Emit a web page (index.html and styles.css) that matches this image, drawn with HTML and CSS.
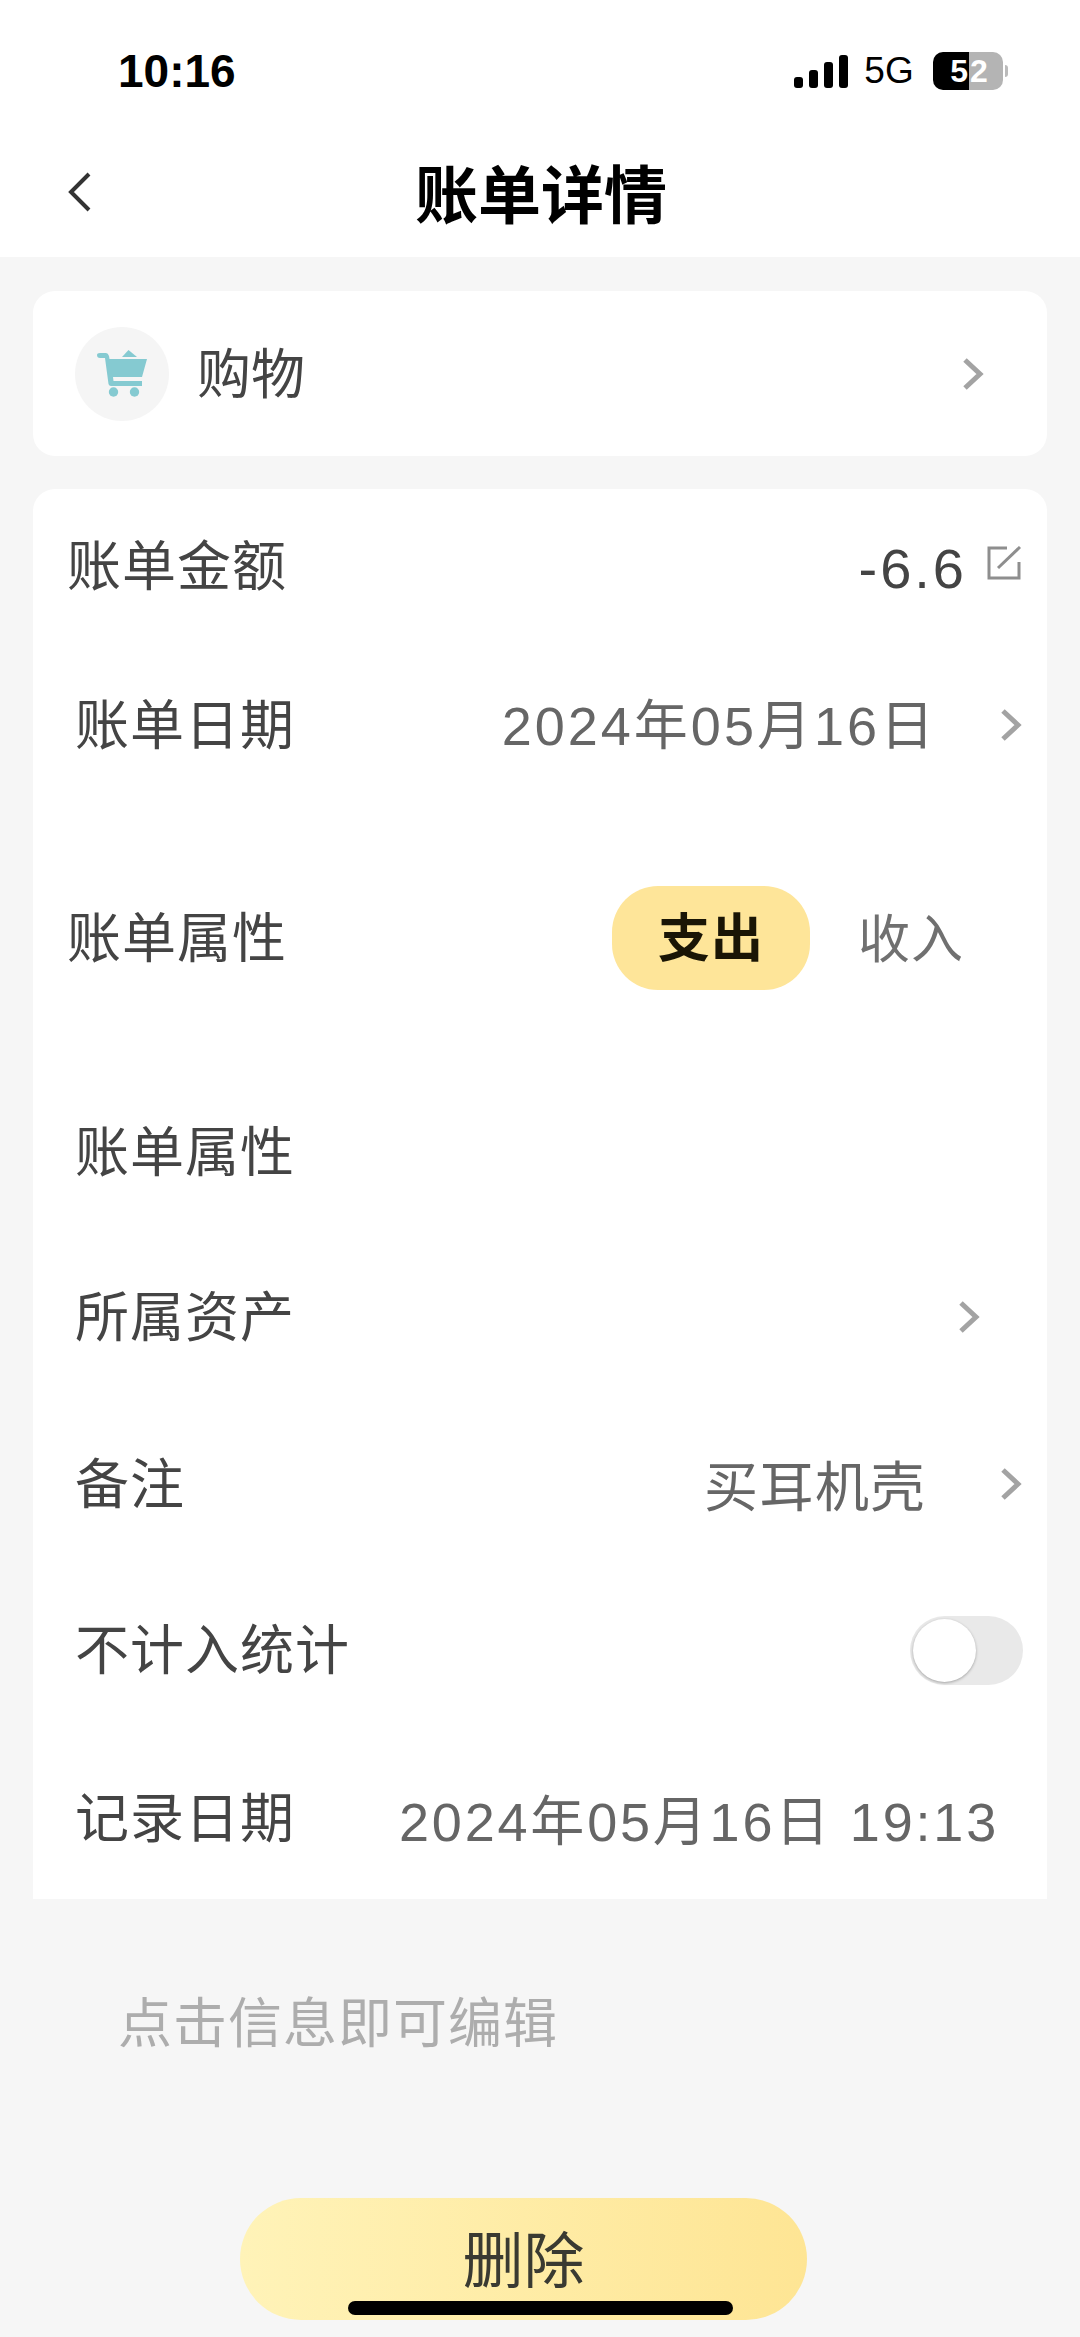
FILE: index.html
```html
<!DOCTYPE html>
<html lang="zh-CN">
<head>
    <meta charset="UTF-8">
    <meta name="viewport" content="width=device-width, initial-scale=1.0">
    <title>账单详情</title>
    <link rel="stylesheet" href="styles.css">
</head>
<body>
    <div class="page">
        <header class="top">
            <div class="status">
                <span class="time">10:16</span>
                <div class="status-right">
                    <svg class="signal" width="54" height="34" viewBox="0 0 54 34">
                        <rect x="0" y="23" width="9" height="11" rx="3"></rect>
                        <rect x="15" y="16" width="9" height="18" rx="3"></rect>
                        <rect x="30" y="8" width="9" height="26" rx="3"></rect>
                        <rect x="45" y="1" width="9" height="33" rx="3"></rect>
                    </svg>
                    <span class="net">5G</span>
                    <div class="battery">
                        <div class="battery-body">
                            <span class="battery-fill">5</span><span class="battery-rest">2</span>
                        </div>
                        <span class="battery-tip"></span>
                    </div>
                </div>
            </div>
            <div class="nav">
                <svg class="back" width="26" height="42" viewBox="0 0 26 42">
                    <path d="M22 3 L4 21 L22 39"></path>
                </svg>
                <h1 class="title">账单详情</h1>
            </div>
        </header>

        <section class="card cat-card">
            <div class="cat-icon">
                <svg width="50" height="47" viewBox="0 0 50 47">
                    <path class="cart-fill" d="M25 7 L31.5 0 L40 7 Z"></path>
                    <path class="cart-fill" d="M0 5 Q0 3 3 3 H9 Q11 3 12 6 L12.5 9 H50 L45 27 H16 L16.5 31 H45 V36 H14 Q12 36 11.5 34 L8 8 H3 Q0 8 0 5 Z"></path>
                    <circle class="cart-fill" cx="16.5" cy="42" r="4.7"></circle>
                    <circle class="cart-fill" cx="37.5" cy="42" r="4.7"></circle>
                </svg>
            </div>
            <span class="cat-name">购物</span>
            <svg class="chev" width="24" height="34" viewBox="0 0 24 34"><path d="M4 3 L19 17 L4 31"></path></svg>
        </section>

        <section class="card detail">
            <div class="row row-amount">
                <span class="label">账单金额</span>
                <div class="value-wrap">
                    <span class="amount">-6.6</span>
                    <svg class="edit" width="34" height="36" viewBox="0 0 34 36">
                        <path d="M20 3 H2 V33 H32 V17"></path>
                        <path d="M11 23 L33 2"></path>
                    </svg>
                </div>
            </div>
            <div class="row row-date">
                <span class="label inset">账单日期</span>
                <div class="value-wrap">
                    <span class="value">2024年05月16日</span>
                    <svg class="chev" width="24" height="34" viewBox="0 0 24 34"><path d="M4 3 L19 17 L4 31"></path></svg>
                </div>
            </div>
            <div class="row row-type">
                <span class="label">账单属性</span>
                <div class="type-tabs">
                    <span class="tab-on">支出</span>
                    <span class="tab-off">收入</span>
                </div>
            </div>
            <div class="row row-attr">
                <span class="label inset">账单属性</span>
            </div>
            <div class="row row-asset">
                <span class="label inset">所属资产</span>
                <svg class="chev" width="24" height="34" viewBox="0 0 24 34"><path d="M4 3 L19 17 L4 31"></path></svg>
            </div>
            <div class="row row-note">
                <span class="label inset">备注</span>
                <div class="value-wrap">
                    <span class="value note-text">买耳机壳</span>
                    <svg class="chev" width="24" height="34" viewBox="0 0 24 34"><path d="M4 3 L19 17 L4 31"></path></svg>
                </div>
            </div>
            <div class="row row-stat">
                <span class="label inset">不计入统计</span>
                <div class="switch"><span class="knob"></span></div>
            </div>
            <div class="row row-rec">
                <span class="label inset">记录日期</span>
                <span class="value rec-text">2024年05月16日 19:13</span>
            </div>
        </section>

        <p class="hint">点击信息即可编辑</p>

        <button class="del-btn">删除</button>
        <div class="home-bar"></div>
    </div>
</body>
</html>
```

FILE: styles.css
```css
* {
    box-sizing: border-box;
}

body {
    margin: 0;
    font-family: "Noto Sans CJK SC", "Liberation Sans", sans-serif;
    background-color: #f6f6f6;
    color: #333;
}

.page {
    position: relative;
    height: 2337px;
    overflow: hidden;
}

/* top bar */
.top {
    background-color: #fff;
    height: 257px;
}

.status {
    height: 130px;
    padding: 45px 72px 0 118px;
    display: flex;
    justify-content: space-between;
    align-items: flex-start;
    color: #000;
}

.time {
    font-family: "Liberation Sans", sans-serif;
    font-size: 46px;
    font-weight: bold;
    line-height: 52px;
}

.status-right {
    display: flex;
    align-items: center;
    gap: 13px;
    height: 52px;
}

.signal rect {
    fill: #000;
}

.net {
    font-family: "Liberation Sans", sans-serif;
    font-size: 37px;
    width: 56px;
    margin-right: 3px;
    text-align: center;
}

.battery {
    display: flex;
    align-items: center;
}

.battery-body {
    display: flex;
    width: 70px;
    height: 38px;
    border-radius: 10px;
    overflow: hidden;
    font-family: "Liberation Sans", sans-serif;
    font-size: 32px;
    font-weight: bold;
    line-height: 38px;
    color: #fff;
}

.battery-fill {
    width: 36px;
    background-color: #000;
    text-align: right;
    padding-right: 1px;
}

.battery-rest {
    width: 34px;
    background-color: #b4b4b4;
    text-align: left;
    padding-left: 1px;
}

.battery-tip {
    width: 3px;
    height: 12px;
    margin-left: 2px;
    background-color: #bbb;
    border-radius: 0 3px 3px 0;
}

.nav {
    position: relative;
    height: 127px;
    display: flex;
    justify-content: center;
    align-items: center;
}

.back {
    position: absolute;
    left: 67px;
    top: 41px;
}

.back path {
    fill: none;
    stroke: #333;
    stroke-width: 4;
}

.title {
    margin: 0 0 6px 2px;
    font-size: 63px;
    font-weight: bold;
    color: #000;
    line-height: 84px;
}

/* cards */
.card {
    background-color: #fff;
    margin: 0 33px;
}

.cat-card {
    margin-top: 34px;
    height: 165px;
    border-radius: 22px;
    display: flex;
    align-items: center;
    padding: 0 62px 0 42px;
}

.cat-icon {
    width: 94px;
    height: 94px;
    border-radius: 50%;
    background-color: #f5f5f5;
    display: flex;
    align-items: center;
    justify-content: center;
}

.cart-fill {
    fill: #85cad1;
}

.cat-name {
    font-size: 54px;
    line-height: 72px;
    margin: 0 0 6px 28px;
    color: #444;
    flex: 1;
}

.chev path {
    fill: none;
    stroke: #a3a3a3;
    stroke-width: 5;
}

.detail {
    margin-top: 33px;
    height: 1410px;
    border-radius: 22px 22px 0 0;
    display: flex;
    flex-direction: column;
}

.row {
    display: flex;
    justify-content: space-between;
    align-items: center;
    padding: 0 24px 0 34px;
}

.row-amount { height: 154px; padding-right: 26px; }
.row-date { height: 164px; padding-right: 24px; }
.row-type { height: 262px; padding-right: 83px; }
.row-attr { height: 166px; }
.row-asset { height: 164px; padding-right: 66px; }
.row-note { height: 170px; }
.row-stat { height: 162px; padding-right: 24px; }
.row-rec { height: 167px; padding-top: 6px; padding-right: 48px; }

.label {
    font-size: 54px;
    letter-spacing: 1px;
    line-height: 72px;
    margin-bottom: 6px;
    color: #444;
}

.inset {
    margin-left: 8px;
}

.value-wrap {
    display: flex;
    align-items: center;
}

.value {
    font-family: "Liberation Sans", "Noto Sans CJK SC", sans-serif;
    font-size: 54px;
    letter-spacing: 3px;
    line-height: 72px;
    color: #666;
}

.amount {
    font-family: "Liberation Sans", sans-serif;
    font-size: 56px;
    letter-spacing: 3px;
    color: #444;
    margin-top: 5px;
}

.edit {
    margin: 0 0 6px 20px;
}

.edit path {
    fill: none;
    stroke: #8e8e8e;
    stroke-width: 3;
}

.row-date .value {
    margin-top: 2px;
}

.row-date .chev {
    margin-left: 62px;
}

.note-text {
    letter-spacing: 1.5px;
    margin-top: 8px;
}

.row-note .chev {
    margin-left: 73px;
}

.rec-text {
    letter-spacing: 2.8px;
    margin-top: 8px;
}

.type-tabs {
    display: flex;
    align-items: center;
}

.tab-on {
    width: 198px;
    height: 104px;
    border-radius: 46px;
    background-color: #fee599;
    font-size: 52px;
    font-weight: bold;
    color: #1a1505;
    letter-spacing: 1px;
    text-align: center;
    line-height: 98px;
}

.tab-off {
    margin: 0 0 6px 48px;
    font-size: 52px;
    letter-spacing: 1px;
    color: #707070;
}

.switch {
    width: 113px;
    height: 69px;
    border-radius: 35px;
    background-color: #e9e9e9;
    padding: 3px;
}

.knob {
    display: block;
    width: 63px;
    height: 63px;
    border-radius: 50%;
    background-color: #fff;
    box-shadow: 0 1px 3px rgba(0, 0, 0, 0.3);
}

.hint {
    margin: 83px 0 0 118px;
    font-size: 54px;
    letter-spacing: 1px;
    color: #adadad;
    line-height: 76px;
}

.del-btn {
    display: block;
    width: 567px;
    height: 122px;
    margin: 140px 0 0 240px;
    border: none;
    border-radius: 61px;
    background: linear-gradient(90deg, #fff3b8, #fee594);
    font-family: inherit;
    font-size: 61px;
    color: #3a3a32;
    padding: 0 0 4px;
    line-height: 84px;
}

.home-bar {
    position: absolute;
    left: 348px;
    top: 2301px;
    width: 385px;
    height: 14px;
    border-radius: 7px;
    background-color: #000;
}
```
